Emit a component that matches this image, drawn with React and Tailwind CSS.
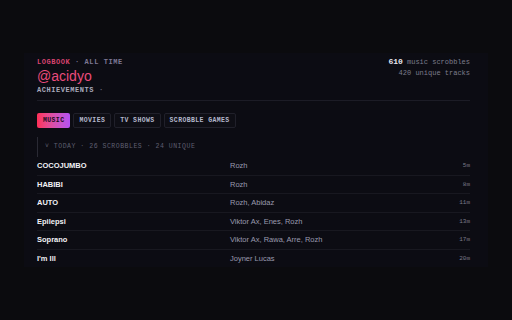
import React from 'react';

const mono = "font-['Liberation_Mono','DejaVu_Sans_Mono',monospace]";
const sans = "font-['Liberation_Sans',Arial,sans-serif]";

const tracks = [
  { title: 'COCOJUMBO', artist: 'Rozh', ago: '5m' },
  { title: 'HABIBI', artist: 'Rozh', ago: '8m' },
  { title: 'AUTO', artist: 'Rozh, Abidaz', ago: '11m' },
  { title: 'Epilepsi', artist: 'Viktor Ax, Enes, Rozh', ago: '13m' },
  { title: 'Soprano', artist: 'Viktor Ax, Rawa, Arre, Rozh', ago: '17m' },
  { title: "I'm Ill", artist: 'Joyner Lucas', ago: '20m' },
];

const tabs = ['Music', 'Movies', 'TV Shows', 'Scrobble Games'];

export default function App() {
  return (
    <div className="w-[512px] h-[320px] bg-[#0b0b0e] pt-[53px] pl-[24px] overflow-hidden">
      <div className="w-[464px] h-[214px] bg-[#0c0c13] pl-[13px] pr-[18px] pt-[4px]">
        {/* header */}
        <div className="flex justify-between">
          <div className="flex flex-col">
            <div className={`${mono} text-[7px] font-bold tracking-[0.08em] uppercase leading-[10px]`}>
              <span className="text-[#d9436f]">Logbook</span>
              <span className="text-[#7e7893]"> · All time</span>
            </div>
            <div className={`${sans} text-[14px] leading-[14px] mt-[2px] text-[#ea4b7c]`}>@acidyo</div>
            <div className={`${mono} text-[7px] font-bold tracking-[0.08em] uppercase leading-[10px] mt-[2px] text-[#a9a9bb]`}>
              Achievements <span className="text-[#6e6e80]">·</span>
            </div>
          </div>
          <div className={`${mono} flex flex-col items-end text-[7px] leading-[10px] text-[#7c7c8c]`}>
            <div>
              <span className="text-[#e8e8f0] font-bold text-[8px]">610</span> music scrobbles
            </div>
            <div className="mt-[1px]">420 unique tracks</div>
          </div>
        </div>

        <div className="h-px bg-[#1c1c26] mt-[5px]" />

        {/* tabs */}
        <div className={`${mono} flex gap-[3px] mt-[12px] text-[6.5px] font-bold uppercase tracking-[0.06em]`}>
          {tabs.map((t, i) =>
            i === 0 ? (
              <div
                key={t}
                className="h-[15px] px-[6px] flex items-center rounded-[2px] bg-gradient-to-r from-[#ff2d55] to-[#b450f5] text-[#1c0c1e]"
              >
                {t}
              </div>
            ) : (
              <div
                key={t}
                className="h-[15px] px-[5px] flex items-center rounded-[2px] border border-[#20202a] bg-[#0e0e15] text-[#b4b8cc]"
              >
                {t}
              </div>
            )
          )}
        </div>

        {/* day group */}
        <div className="mt-[9px] border-l border-[#2a2a34] h-[20px] flex items-center pl-[7px]">
          <span className={`${mono} text-[6.5px] uppercase tracking-[0.08em] text-[#5f5f70]`}>
            ˅ Today · 26 scrobbles · 24 unique
          </span>
        </div>

        <div className="flex flex-col">
          {tracks.map((t, i) => (
            <div
              key={t.title}
              className={`h-[18.5px] flex items-center ${i < tracks.length - 1 ? 'border-b border-[#181820]' : ''}`}
            >
              <div className={`${sans} w-[193px] text-[7.5px] font-bold text-[#f2f2f6]`}>{t.title}</div>
              <div className={`${sans} flex-1 text-[7.5px] text-[#9a9aae]`}>{t.artist}</div>
              <div className={`${mono} text-[6px] text-[#7a7a8a]`}>{t.ago}</div>
            </div>
          ))}
        </div>
      </div>
    </div>
  );
}
